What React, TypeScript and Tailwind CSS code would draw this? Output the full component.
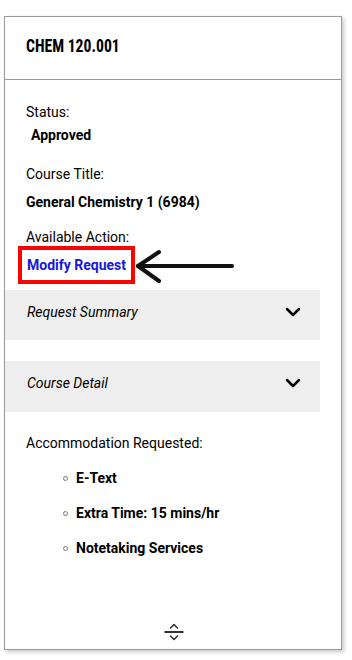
import { ChevronDown } from "lucide-react";

const accommodations = ["E-Text", "Extra Time: 15 mins/hr", "Notetaking Services"];

function AccordionBar({ title, className = "" }: { title: string; className?: string }) {
  return (
    <div className={`mr-[21px] flex h-[50px] items-start justify-between bg-[#eeeeee] pt-[12px] pl-[22px] pr-[15px] ${className}`}>
      <span className="italic leading-5">{title}</span>
      <ChevronDown className="mt-[-2px] h-[24px] w-[24px] text-black" strokeWidth={2.5} />
    </div>
  );
}

export default function App() {
  return (
    <div className="min-h-screen bg-white pt-[16px] pl-[4px] font-['Roboto',sans-serif] text-[14px] text-black">
      <div className="flex h-[634px] w-[338px] flex-col border border-[#9a9a9a] bg-white shadow-[2px_2px_4px_rgba(0,0,0,0.22)]">
        <div className="border-b border-[#9a9a9a] pt-[17px] pb-[21px] pl-[21px]">
          <h1 className="inline-block origin-left scale-x-[0.87] font-['Roboto_Condensed','Roboto',sans-serif] text-[18px] leading-[24px] font-bold">
            CHEM 120.001
          </h1>
        </div>

        <div className="pl-[21px] pt-[22px]">
          <p className="leading-5">Status:</p>
          <p className="mt-[3px] pl-[5px] leading-5 font-bold">Approved</p>
          <p className="mt-[19px] leading-5">Course Title:</p>
          <p className="mt-[8px] leading-5 font-bold">General Chemistry 1 (6984)</p>
          <p className="mt-[15px] leading-5">Available Action:</p>
          <div className="-mt-px ml-[-8px] flex items-center">
            <div className="border-4 border-[#ff0000] px-[5px] py-[5px]">
              <a href="#" className="block leading-5 font-bold text-[#1717e0]">
                Modify Request
              </a>
            </div>
            <svg width="100" height="38" viewBox="0 0 100 38" fill="none" stroke="#111" strokeWidth="4" strokeLinecap="round" strokeLinejoin="round">
              <path d="M3 20 L97 20" />
              <path d="M24 6 L3 20 L24 35" />
            </svg>
          </div>
        </div>

        <AccordionBar title="Request Summary" className="mt-[6px]" />
        <AccordionBar title="Course Detail" className="mt-[21px] h-[51px]" />

        <div className="pl-[21px] pt-[21px]">
          <p className="leading-5">Accommodation Requested:</p>
          <ul className="mt-[15px] flex flex-col gap-[15px]">
            {accommodations.map((item) => (
              <li key={item} className="flex items-center leading-5 font-bold">
                <span className="ml-[37px] mr-[8px] h-[5px] w-[5px] rounded-full border border-[#777]" />
                {item}
              </li>
            ))}
          </ul>
        </div>

        <div className="mt-auto flex justify-center pb-[7px] pl-[2px]">
          <svg width="20" height="20" viewBox="0 0 20 20" fill="none" stroke="#333" strokeLinecap="round" strokeLinejoin="round">
            <path d="M0.5 10 L19.5 10" strokeWidth="2" strokeLinecap="butt" />
            <path d="M6.5 6 L10 2.5 L13.5 6" strokeWidth="1.6" />
            <path d="M6.5 14 L10 17.5 L13.5 14" strokeWidth="1.6" />
          </svg>
        </div>
      </div>
    </div>
  );
}
